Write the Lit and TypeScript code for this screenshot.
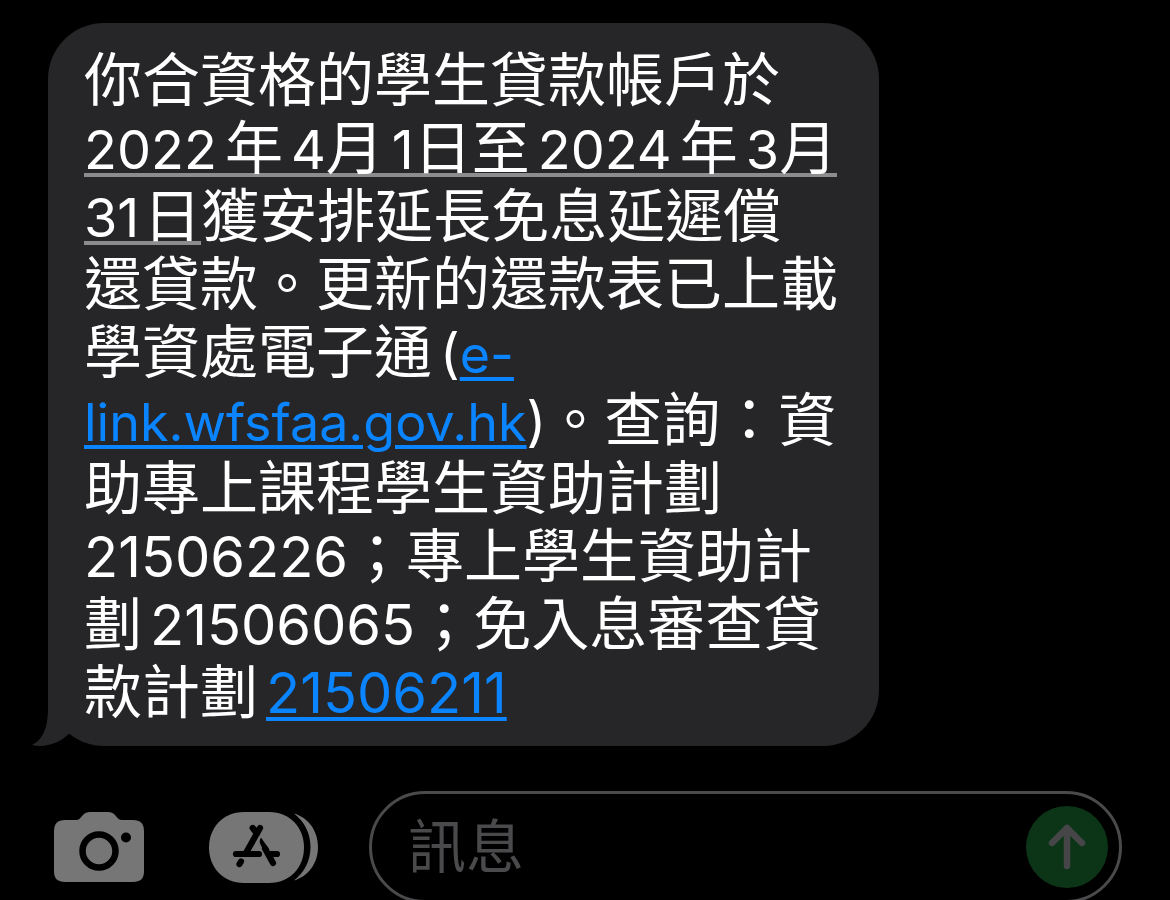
import { LitElement, html, css } from "lit";
import { customElement, property } from "lit/decorators.js";

const FONT = css`Inter, "Noto Sans CJK TC", sans-serif`;

@customElement("message-bubble")
class MessageBubble extends LitElement {
  static styles = css`
    :host {
      display: block;
    }
    .bubble {
      position: relative;
      z-index: 0;
      box-sizing: border-box;
      width: 71%;
      margin: 0 0 0 48px;
      padding: 23px 0 20px 36px;
      border-radius: 56px;
      background: #262628;
      color: #fff;
    }
    .text {
      margin: 0;
      font-family: ${FONT};
      font-size: 58px;
      line-height: 68px;
      white-space: nowrap;
    }
    a {
      color: #0a84ff;
      text-decoration: underline;
      text-decoration-thickness: 4px;
      text-underline-offset: 4px;
    }
    .date {
      color: inherit;
      text-decoration: none;
      background: linear-gradient(#8c8c8e, #8c8c8e) 0 60px / 100% 4px no-repeat;
    }
    .num,
    .phone,
    .url {
      line-height: 56px;
    }
    .num {
      font-size: 54px;
    }
    .phone {
      font-size: 56px;
    }
    .url {
      font-size: 52px;
    }
    .gap {
      padding-left: 8px;
    }
    .gap-after {
      padding-right: 4px;
    }
    .tail {
      position: absolute;
      z-index: -1;
      left: -16px;
      bottom: 0;
      width: 72px;
      height: 60px;
      fill: #262628;
    }
  `;

  render() {
    return html`
      <article class="bubble">
        <svg class="tail" viewBox="0 0 72 60" aria-hidden="true">
          <path d="M16 0V22C16 40 12 53 0 59C14 62 27 57 35.500 49L60 30V0Z" />
        </svg>
        <p class="text" lang="zh-Hant">
          你合資格的學生貸款帳戶於<br /><a class="date" href="#date"
            ><span class="num">2022</span><span class="gap">年</span
            ><span class="num gap">4</span>月<span class="num gap">1</span>日至<span class="num gap">2024</span
            ><span class="gap">年</span><span class="num gap">3</span>月<br /><span class="num gap-after">31</span>日</a
          >獲安排延長免息延遲償<br />還貸款。更新的還款表已上載<br />學資處電子通<span
            class="num gap"
            >(</span
          ><a class="url" href="#e-link">e-<br />link.wfsfaa.gov.hk</a><span class="num">)</span>。查詢：資<br />助專上課程學生資助計劃<br /><span
            class="phone"
            >21506226</span
          >；專上學生資助計<br />劃<span class="phone gap">21506065</span
          >；免入息審查貸<br />款計劃<span class="gap"
            ><a class="phone" href="tel:21506211">21506211</a></span
          >
        </p>
      </article>
    `;
  }
}

@customElement("message-composer")
class MessageComposer extends LitElement {
  @property() placeholder = "";

  static styles = css`
    :host {
      display: flex;
      align-items: center;
      padding: 0 48px 0 54px;
    }
    button {
      flex: none;
      display: block;
      padding: 0;
      border: 0;
      background: none;
    }
    svg {
      display: block;
    }
    .apps {
      margin: 0 51px 0 65px;
    }
    .field {
      flex: 1;
      min-width: 0;
      box-sizing: border-box;
      height: 112px;
      display: flex;
      align-items: center;
      padding: 0 11px 0 36px;
      border: 3px solid #4a4a4c;
      border-radius: 56px;
    }
    input {
      flex: 1;
      min-width: 0;
      padding: 0;
      border: 0;
      outline: 0;
      background: none;
      color: #fff;
      font-family: ${FONT};
      font-size: 58px;
      line-height: 68px;
      height: 84px;
    }
    input::placeholder {
      color: #4a4a4c;
      opacity: 1;
    }
  `;

  render() {
    return html`
      <button aria-label="相機">
        <svg width="90" height="72" viewBox="0 -0.5 90 72">
          <path
            fill="#767676"
            d="M11 8.500H22C25 8.500 26.500 6.500 28.500 4C31 1 33 0.500 36 0.500H54C57 0.500 59 1 61.500 4C63.500 6.500 65 8.500 68 8.500H79Q90 8.500 90 19.500V60Q90 70.500 79 70.500H11Q0 70.500 0 60V19.500Q0 8.500 11 8.500Z"
          />
          <circle cx="45" cy="39.500" r="16.500" fill="none" stroke="#000" stroke-width="6.500" />
          <circle cx="72" cy="26" r="5" fill="#000" />
        </svg>
      </button>
      <button class="apps" aria-label="App">
        <svg width="109" height="72" viewBox="0 -0.5 109 72">
          <path
            fill="#767676"
            d="M35 0.500H60C81 0.500 95 16 95 36C95 56 81 71.500 60 71.500H35C14 71.500 0 56 0 36C0 16 14 0.500 35 0.500Z"
          />
          <path fill="#767676" d="M85 2C99 6 109 19 109 35.500C109 52 99 65 85 69C95.500 61 101.500 49 101.500 35.500C101.500 22 95.500 10 85 2Z" />
          <g fill="none" stroke="#000" stroke-width="6.200" stroke-linecap="round">
            <path d="M51 16.500L37.500 40.500M43.700 16.500L48 22M27 42.500H50M61 42.500H68M56 37L64 51.500" />
            <path d="M32 50L30.500 52.500" />
          </g>
          <path d="M52 26C50 29 50.500 31.500 52 34L55.500 41L60 37.500Z" />
        </svg>
      </button>
      <div class="field">
        <input type="text" aria-label=${this.placeholder} placeholder=${this.placeholder} />
        <button aria-label="傳送">
          <svg width="82" height="82" viewBox="0 0 82 82">
            <circle cx="41" cy="41" r="41" fill="#0c3518" />
            <path
              d="M41 60V22M26 37L41 22L56 37"
              fill="none"
              stroke="#464648"
              stroke-width="6.500"
              stroke-linecap="round"
              stroke-linejoin="round"
            />
          </svg>
        </button>
      </div>
    `;
  }
}

@customElement("app-root")
class AppRoot extends LitElement {
  static styles = css`
    :host {
      display: flex;
      flex-direction: column;
      gap: 45px;
      box-sizing: border-box;
      height: 100vh;
      padding-top: 23px;
      overflow: hidden;
      background: #000;
    }
    message-bubble,
    message-composer {
      flex: none;
    }
  `;

  render() {
    return html`
      <message-bubble></message-bubble>
      <message-composer placeholder="訊息"></message-composer>
    `;
  }
}
